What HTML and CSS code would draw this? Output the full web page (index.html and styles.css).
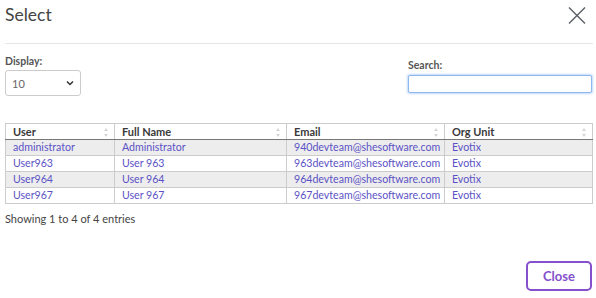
FILE: index.html
```html
<!DOCTYPE html>
<html lang="en">
<head>
    <meta charset="UTF-8">
    <meta name="viewport" content="width=device-width, initial-scale=1.0">
    <title>Select</title>
    <link rel="stylesheet" href="styles.css">
</head>
<body>

    <div class="modal">
        <div class="modal-header">
            <h2 class="modal-title">Select</h2>
            <span class="btn-x">
                <svg width="18" height="17" viewBox="0 0 18 17">
                    <path d="M1 0.5 L17 16.5 M17 0.5 L1 16.5" stroke="#5b5f66" stroke-width="1.4" fill="none" />
                </svg>
            </span>
        </div>

        <div class="controls">
            <div class="length">
                <label for="display">Display:</label>
                <div class="select-box" id="display">
                    <span>10</span>
                    <svg width="8" height="6" viewBox="0 0 8 6">
                        <path d="M1 1.5 L4 4.5 L7 1.5" stroke="#333" stroke-width="1.5" fill="none" />
                    </svg>
                </div>
            </div>
            <div class="search">
                <label for="search">Search:</label>
                <input type="text" id="search" />
            </div>
        </div>

        <table class="grid">
            <thead>
                <tr>
                    <th class="c-user">User<span class="sort"></span></th>
                    <th class="c-name">Full Name<span class="sort"></span></th>
                    <th class="c-mail">Email<span class="sort"></span></th>
                    <th>Org Unit<span class="sort"></span></th>
                </tr>
            </thead>
            <tbody>
                <tr>
                    <td>administrator</td>
                    <td>Administrator</td>
                    <td>940devteam@shesoftware.com</td>
                    <td>Evotix</td>
                </tr>
                <tr>
                    <td>User963</td>
                    <td>User 963</td>
                    <td>963devteam@shesoftware.com</td>
                    <td>Evotix</td>
                </tr>
                <tr>
                    <td>User964</td>
                    <td>User 964</td>
                    <td>964devteam@shesoftware.com</td>
                    <td>Evotix</td>
                </tr>
                <tr>
                    <td>User967</td>
                    <td>User 967</td>
                    <td>967devteam@shesoftware.com</td>
                    <td>Evotix</td>
                </tr>
            </tbody>
        </table>

        <p class="info">Showing 1 to 4 of 4 entries</p>

        <div class="modal-footer">
            <button type="button" class="btn-close">Close</button>
        </div>
    </div>

</body>
</html>
```

FILE: styles.css
```css
body {
    font-family: Lato, "Liberation Sans", sans-serif;
    margin: 0;
    padding: 0;
    background-color: #fff;
    color: #444;
}
.modal {
    padding: 0 3px 0 5px;
}
.modal-header {
    display: flex;
    justify-content: space-between;
    align-items: flex-start;
    height: 43px;
    border-bottom: 1px solid #e6e6e6;
}
.modal-title {
    margin: 5px 0 0 0;
    font-size: 17.5px;
    font-weight: normal;
    line-height: 20px;
    color: #444;
}
.btn-x {
    margin: 7px 7px 0 0;
    display: block;
    line-height: 0;
}
.controls {
    display: flex;
    justify-content: space-between;
    align-items: flex-start;
    padding-top: 11px;
}
label {
    display: block;
    font-size: 10.5px;
    font-weight: bold;
    color: #555;
    line-height: 13px;
}
.select-box {
    margin-top: 2px;
    width: 76px;
    height: 26px;
    box-sizing: border-box;
    border: 1px solid #ccc;
    border-radius: 3px;
    display: flex;
    align-items: center;
    justify-content: space-between;
    padding: 0 6px 0 6px;
    font-size: 11px;
    color: #666;
}
.search {
    width: 184px;
    padding-top: 4px;
    margin-right: 1px;
}
.search input[type="text"] {
    display: block;
    width: 100%;
    height: 18px;
    box-sizing: border-box;
    margin-top: 3px;
    border: 1px solid #8fb8f0;
    border-radius: 2px;
    box-shadow: 0 0 2px 1px rgba(120, 170, 240, 0.45);
    outline: none;
}
.grid {
    margin-top: 27px;
    width: 588px;
    table-layout: fixed;
    border-collapse: collapse;
    font-size: 11px;
    border: 1px solid #ccc;
}
.grid th {
    position: relative;
    text-align: left;
    font-weight: bold;
    color: #3a3a3a;
    height: 15px;
    padding: 0 7px;
    border-left: 1px solid #ccc;
    border-bottom: 1px solid #777;
    line-height: 15px;
}
.grid td {
    color: #5b52c6;
    font-size: 10.6px;
    height: 15px;
    padding: 0 7px;
    border: 1px solid #ccc;
    line-height: 15px;
    white-space: nowrap;
}
.grid tbody tr:nth-child(odd) td {
    background-color: #ededed;
}
.c-user {
    width: 94px;
}
.c-name {
    width: 157px;
}
.c-mail {
    width: 143px;
}
.sort {
    position: absolute;
    right: 5px;
    top: 4px;
    width: 5px;
    height: 9px;
}
.sort::before,
.sort::after {
    content: "";
    position: absolute;
    left: 0;
    border-left: 2.5px solid transparent;
    border-right: 2.5px solid transparent;
}
.sort::before {
    top: 0;
    border-bottom: 3.5px solid #d6d6d6;
}
.sort::after {
    bottom: 0;
    border-top: 3.5px solid #d6d6d6;
}
.info {
    margin: 8px 0 0 0;
    font-size: 11px;
    line-height: 14px;
    color: #444;
}
.modal-footer {
    display: flex;
    justify-content: flex-end;
    padding-top: 35px;
}
.btn-close {
    width: 66px;
    height: 30px;
    margin-right: 1px;
    background-color: #fff;
    border: 2px solid #8550cc;
    border-radius: 5px;
    color: #8550cc;
    font-family: Lato, "Liberation Sans", sans-serif;
    font-size: 13px;
    font-weight: bold;
    cursor: pointer;
}
```
